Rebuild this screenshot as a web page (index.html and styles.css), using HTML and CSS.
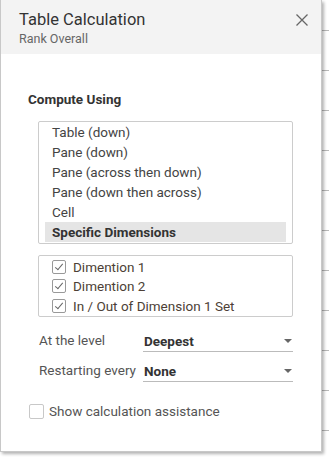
FILE: index.html
```html
<!DOCTYPE html>
<html lang="en">
<head>
  <meta charset="UTF-8">
  <title>Table Calculation</title>
  <link rel="stylesheet" href="styles.css">
</head>
<body>
  <div class="dialog">
    <!-- Cabeçalho -->
    <div class="dialog-header">
      <div class="title">Table Calculation</div>
      <div class="subtitle">Rank Overall</div>
      <svg class="close" width="12" height="12" viewBox="0 0 12 12">
        <path d="M0.5 0.5 L11.5 11.5 M11.5 0.5 L0.5 11.5" stroke="#666" stroke-width="1.3" fill="none"/>
      </svg>
    </div>

    <div class="dialog-body">
      <div class="section-title">Compute Using</div>

      <div class="listbox">
        <div class="list-item">Table (down)</div>
        <div class="list-item">Pane (down)</div>
        <div class="list-item">Pane (across then down)</div>
        <div class="list-item">Pane (down then across)</div>
        <div class="list-item">Cell</div>
        <div class="list-item selected">Specific Dimensions</div>
      </div>

      <div class="checklist">
        <div class="check-item"><span class="checkbox checked"></span>Dimention 1</div>
        <div class="check-item"><span class="checkbox checked"></span>Dimention 2</div>
        <div class="check-item"><span class="checkbox checked"></span>In / Out of Dimension 1 Set</div>
      </div>

      <div class="field">
        <span class="field-label">At the level</span>
        <div class="dropdown"><span>Deepest</span><span class="arrow"></span></div>
      </div>
      <div class="field">
        <span class="field-label">Restarting every</span>
        <div class="dropdown"><span>None</span><span class="arrow"></span></div>
      </div>

      <div class="assist">
        <span class="checkbox"></span>Show calculation assistance
      </div>
    </div>
  </div>
</body>
</html>
```

FILE: styles.css
```css
body {
  margin: 0;
  padding: 0;
  font-family: 'Roboto', 'Liberation Sans', sans-serif;
  color: #333333;
  background-color: white;
  background-image: repeating-linear-gradient(to bottom, transparent 0, transparent 30px, #b8b8b8 30px, #b8b8b8 31px, transparent 31px, transparent 40px);
  height: 460px;
}
.dialog {
  width: 320px;
  height: 451px;
  background-color: white;
  border: 1px solid #c8c8c8;
  border-top: none;
  box-shadow: 2px 2px 3px rgba(0, 0, 0, 0.3);
  box-sizing: content-box;
}
.dialog-header {
  position: relative;
  background-color: #f3f3f3;
  height: 54px;
  padding: 9px 18px 0;
  box-sizing: border-box;
}
.title {
  font-size: 16.5px;
  line-height: 21px;
  color: #333333;
}
.subtitle {
  font-size: 12.5px;
  line-height: 18px;
  color: #666666;
}
.close {
  position: absolute;
  top: 14px;
  right: 13px;
}
.dialog-body {
  padding: 36px 27px 0;
}
.section-title {
  font-size: 13.5px;
  font-weight: bold;
  line-height: 18px;
  margin-bottom: 13px;
}
.listbox, .checklist {
  margin-left: 10px;
  width: 255px;
  border: 1px solid #cccccc;
  border-radius: 2px;
  box-sizing: border-box;
  font-size: 13.5px;
  color: #444444;
}
.listbox {
  height: 123px;
  padding: 0 6px;
}
.list-item {
  height: 20px;
  line-height: 20px;
  padding-left: 7px;
}
.list-item.selected {
  background-color: #e5e5e5;
  font-weight: bold;
  color: #333333;
}
.checklist {
  margin-top: 11px;
  height: 62px;
  padding: 1px 13px 0;
}
.check-item {
  display: flex;
  align-items: center;
  height: 19.5px;
  color: #4d3f36;
}
.checkbox {
  display: inline-block;
  position: relative;
  width: 14px;
  height: 14px;
  border: 1px solid #999999;
  border-radius: 2px;
  box-sizing: border-box;
  margin-right: 7px;
  background-color: white;
}
.checkbox.checked::after {
  content: '';
  position: absolute;
  left: 4px;
  top: 1px;
  width: 3px;
  height: 7px;
  border-right: 1.5px solid #666666;
  border-bottom: 1.5px solid #666666;
  transform: rotate(40deg);
}
.field {
  display: flex;
  align-items: flex-end;
  margin-left: 11px;
  margin-top: 13px;
  font-size: 13.5px;
}
.field + .field {
  margin-top: 8px;
}
.field-label {
  width: 104px;
  color: #555555;
  line-height: 18px;
  padding-bottom: 3px;
}
.dropdown {
  flex: 1;
  display: flex;
  justify-content: space-between;
  align-items: center;
  border-bottom: 1px solid #bbbbbb;
  font-weight: bold;
  height: 21px;
  padding-left: 1px;
  padding-right: 1px;
  margin-right: 1px;
}
.arrow {
  width: 0;
  height: 0;
  border-left: 4px solid transparent;
  border-right: 4px solid transparent;
  border-top: 4px solid #666666;
}
.assist {
  display: flex;
  align-items: center;
  margin-top: 21px;
  margin-left: 1px;
  font-size: 13.5px;
  color: #555555;
}
.assist .checkbox {
  width: 15px;
  height: 15px;
  border-color: #c8c8c8;
  margin-right: 5px;
}
```
